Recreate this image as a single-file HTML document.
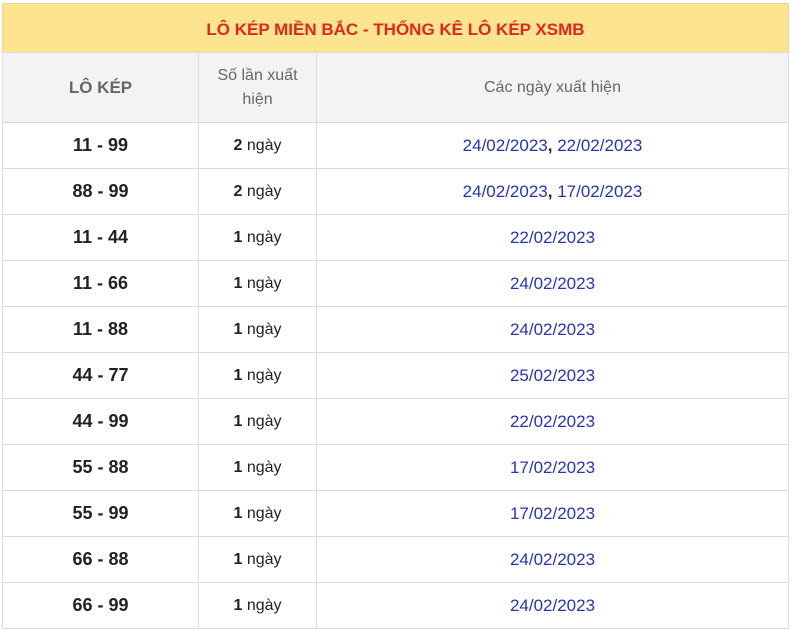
<!DOCTYPE html>
<html><head><meta charset="utf-8"><style>
*{margin:0;padding:0;box-sizing:border-box}
body{width:794px;height:630px;background:#fff;font-family:"Liberation Sans",Arial,sans-serif;position:relative;overflow:hidden}
.t{position:absolute;left:2px;top:3px;width:787px;height:49px;background:#fde58f;color:#e3261c;font-weight:bold;font-size:17px;text-align:center;line-height:52px;border:1px solid #e4d6a0;border-bottom:none}
table{position:absolute;left:2px;top:52px;width:787px;border-collapse:collapse}
td{border:1px solid #dcdcdc;text-align:center;height:46px;font-size:16px;color:#222}
tr.h td{height:70px;background:#f3f3f3;color:#666;font-size:16px;line-height:24px}
.c1{width:196px;font-weight:bold;font-size:18px}
.c2{width:118px}
.b{font-weight:bold}
.d{color:#2634b8;font-size:17px}
.d b{color:#222}
</style></head><body>
<div class="t">LÔ KÉP MIỀN BẮC - THỐNG KÊ LÔ KÉP XSMB</div>
<table>
<tr class="h"><td class="c1" style="color:#666;font-size:17px">LÔ KÉP</td><td class="c2">Số lần xuất<br>hiện</td><td>Các ngày xuất hiện</td></tr>
<tr><td class="c1">11 - 99</td><td class="c2"><span class="b">2</span> ngày</td><td class="d">24/02/2023<b>,</b> 22/02/2023</td></tr>
<tr><td class="c1">88 - 99</td><td class="c2"><span class="b">2</span> ngày</td><td class="d">24/02/2023<b>,</b> 17/02/2023</td></tr>
<tr><td class="c1">11 - 44</td><td class="c2"><span class="b">1</span> ngày</td><td class="d">22/02/2023</td></tr>
<tr><td class="c1">11 - 66</td><td class="c2"><span class="b">1</span> ngày</td><td class="d">24/02/2023</td></tr>
<tr><td class="c1">11 - 88</td><td class="c2"><span class="b">1</span> ngày</td><td class="d">24/02/2023</td></tr>
<tr><td class="c1">44 - 77</td><td class="c2"><span class="b">1</span> ngày</td><td class="d">25/02/2023</td></tr>
<tr><td class="c1">44 - 99</td><td class="c2"><span class="b">1</span> ngày</td><td class="d">22/02/2023</td></tr>
<tr><td class="c1">55 - 88</td><td class="c2"><span class="b">1</span> ngày</td><td class="d">17/02/2023</td></tr>
<tr><td class="c1">55 - 99</td><td class="c2"><span class="b">1</span> ngày</td><td class="d">17/02/2023</td></tr>
<tr><td class="c1">66 - 88</td><td class="c2"><span class="b">1</span> ngày</td><td class="d">24/02/2023</td></tr>
<tr><td class="c1">66 - 99</td><td class="c2"><span class="b">1</span> ngày</td><td class="d">24/02/2023</td></tr>
</table>
</body></html>
